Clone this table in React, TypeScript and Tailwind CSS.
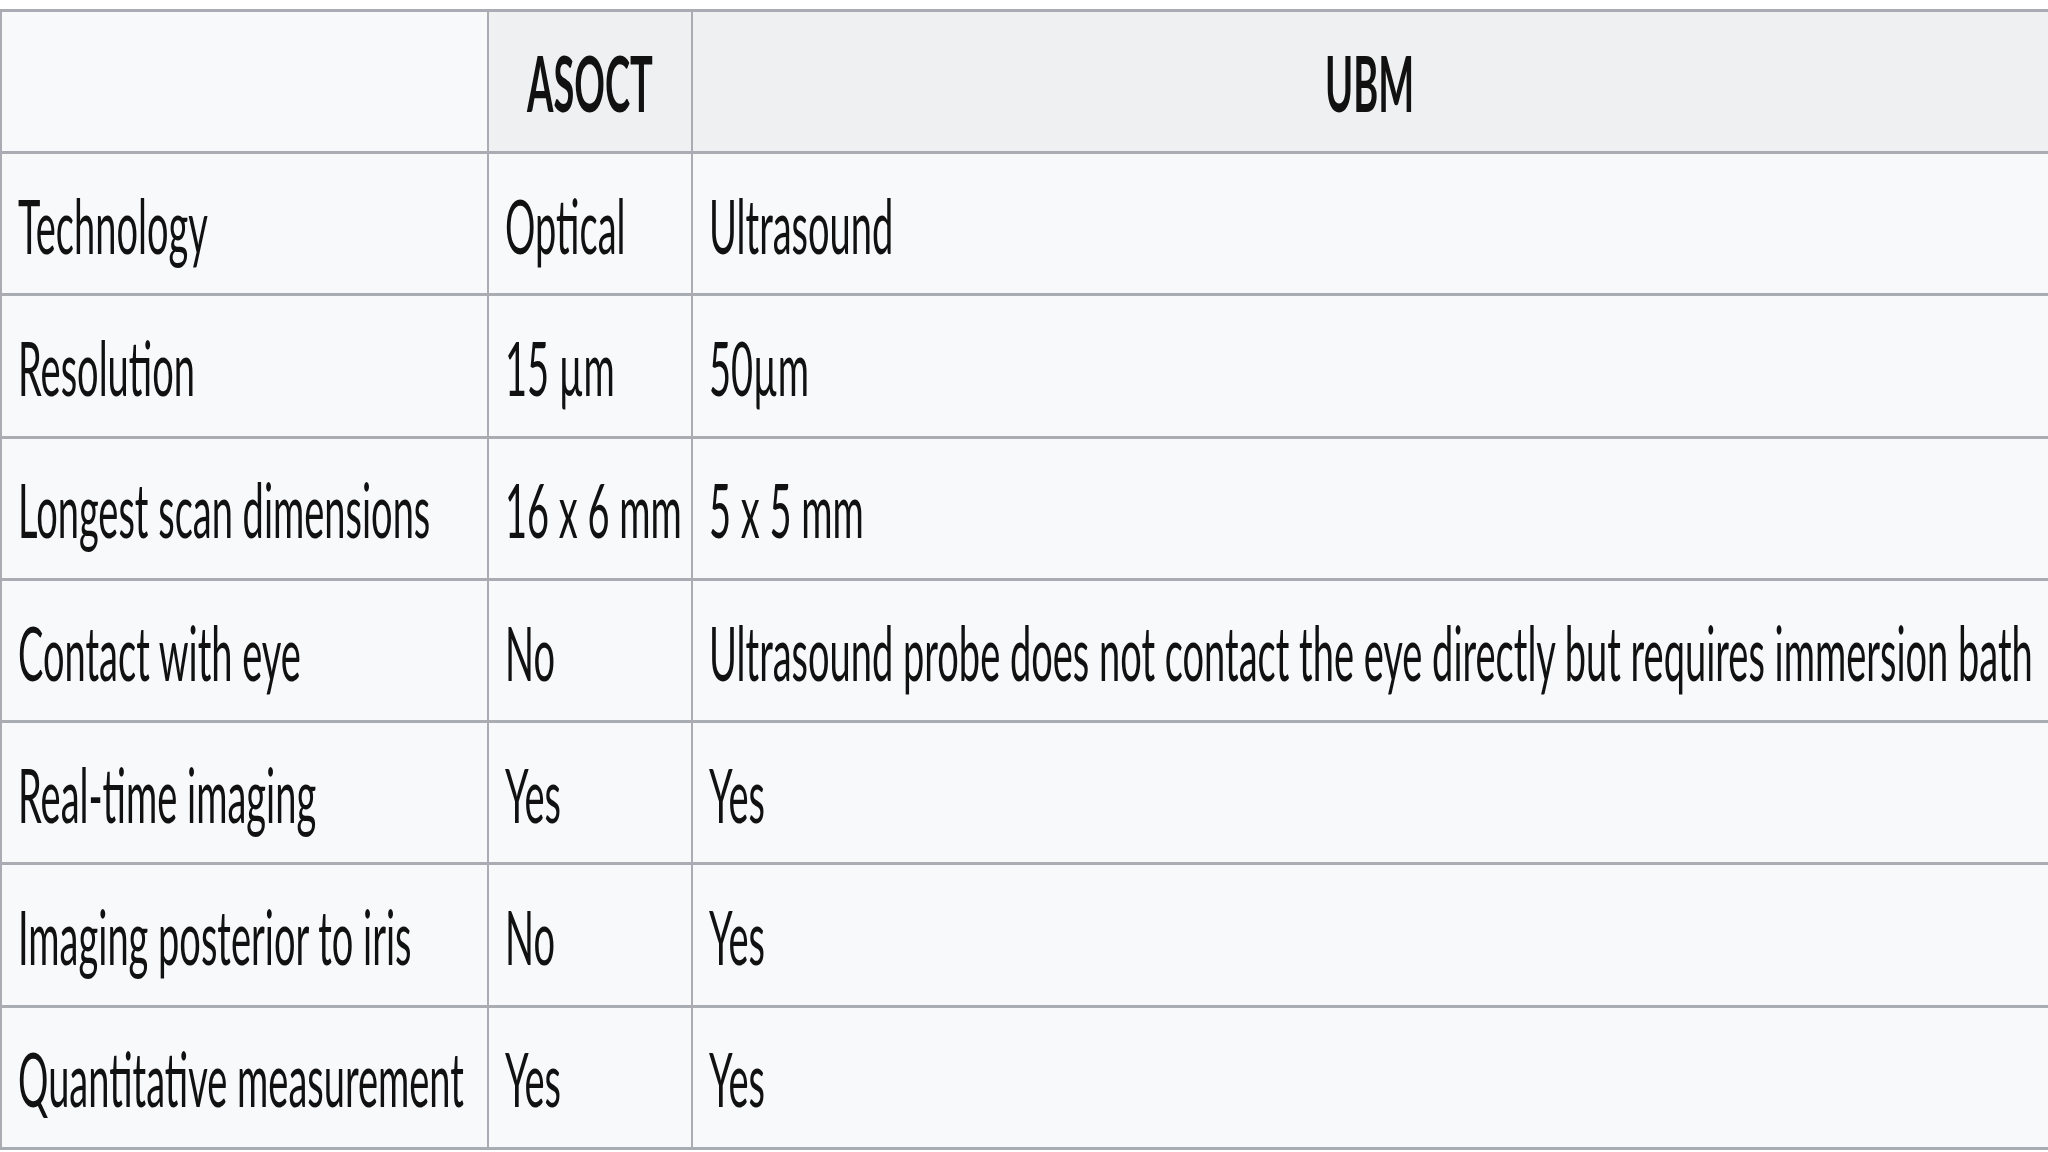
import React from 'react';

const rows: [string, string, string][] = [
  ['Technology', 'Optical', 'Ultrasound'],
  ['Resolution', '15 µm', '50µm'],
  ['Longest scan dimensions', '16 x 6 mm', '5 x 5 mm'],
  ['Contact with eye', 'No', 'Ultrasound probe does not contact the eye directly but requires immersion bath'],
  ['Real-time imaging', 'Yes', 'Yes'],
  ['Imaging posterior to iris', 'No', 'Yes'],
  ['Quantitative measurement', 'Yes', 'Yes'],
];

// the source table was stretched vertically, so each label is drawn at half height then scaled up
const Txt = ({ children, bold }: { children: React.ReactNode; bold?: boolean }) => (
  <span
    className={`inline-block whitespace-nowrap text-[38px] leading-none scale-y-[2] text-[#111] ${bold ? 'font-bold' : 'font-normal'}`}
  >
    {children}
  </span>
);

const cell = 'h-[142.3px] flex items-center border-r-2 border-b-[3px] border-[#a9adb3] bg-[#f8f9fa] pl-[16px]';

const App: React.FC = () => {
  return (
    <div className="w-[2048px] h-[1152px] bg-white pt-[9px] overflow-hidden font-['Lato',sans-serif]">
      <div className="grid grid-cols-[487px_204px_1fr] border-t-[3px] border-l-2 border-[#a9adb3] w-[2060px]">
        {/* header */}
        <div className="h-[142px] border-r-2 border-b-[3px] border-[#a9adb3] bg-[#f8f9fa]" />
        <div className="h-[142px] flex items-center justify-center border-r-2 border-b-[3px] border-[#a9adb3] bg-[#eff0f1]">
          <Txt bold>ASOCT</Txt>
        </div>
        <div className="h-[142px] flex items-center justify-center border-r-2 border-b-[3px] border-[#a9adb3] bg-[#eff0f1] pr-[12px]">
          <Txt bold>UBM</Txt>
        </div>

        {rows.map(([a, b, c]) => (
          <React.Fragment key={a}>
            <div className={cell}>
              <Txt>{a}</Txt>
            </div>
            <div className={cell}>
              <Txt>{b}</Txt>
            </div>
            <div className={cell}>
              <Txt>{c}</Txt>
            </div>
          </React.Fragment>
        ))}
      </div>
    </div>
  );
};

export default App;
